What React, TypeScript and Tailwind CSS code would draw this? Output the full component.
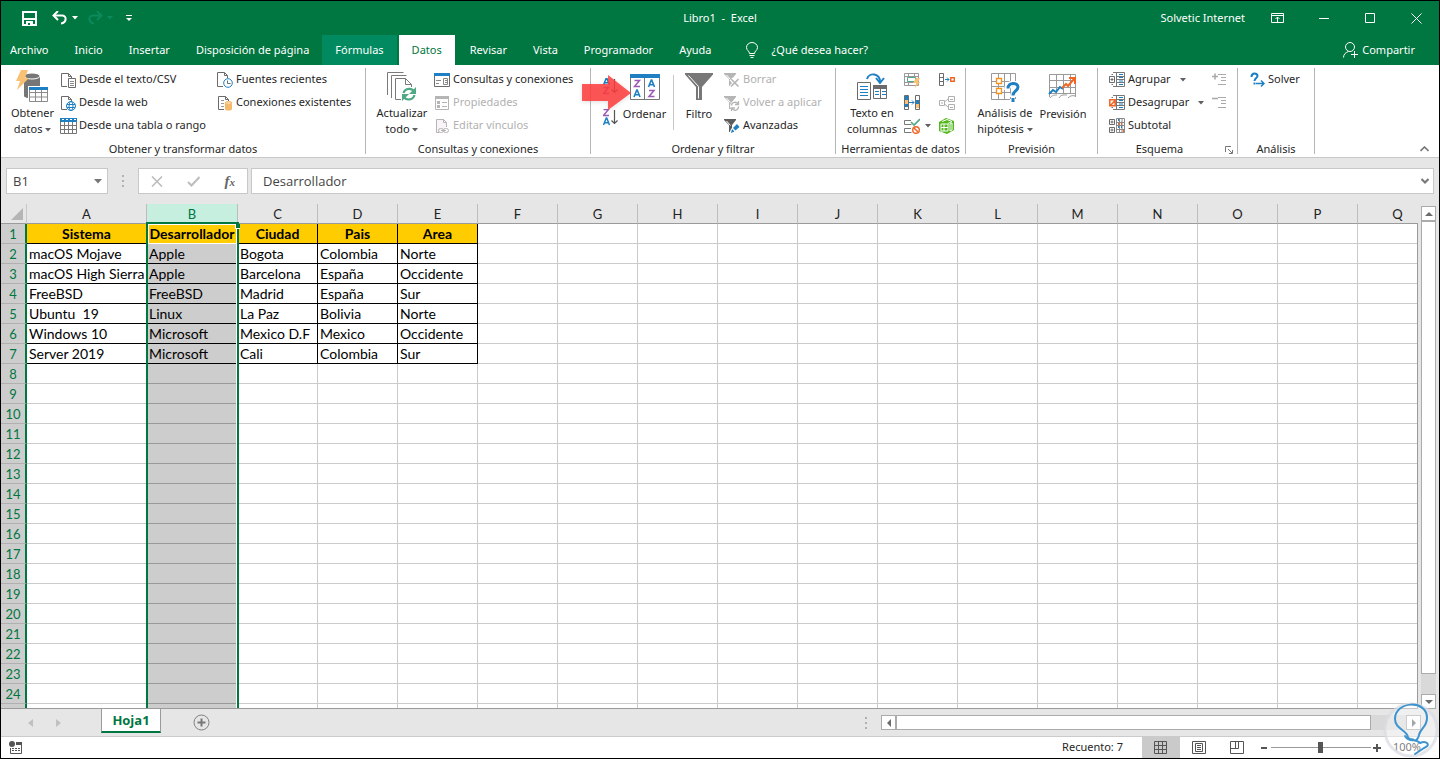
import type { ReactNode } from "react";
import { clsx } from "clsx";

const rows = [
  ["Sistema", "Desarrollador", "Ciudad", "Pais", "Area"],
  ["macOS Mojave", "Apple", "Bogota", "Colombia", "Norte"],
  ["macOS High Sierra", "Apple", "Barcelona", "España", "Occidente"],
  ["FreeBSD", "FreeBSD", "Madrid", "España", "Sur"],
  ["Ubuntu  19", "Linux", "La Paz", "Bolivia", "Norte"],
  ["Windows 10", "Microsoft", "Mexico D.F", "Mexico", "Occidente"],
  ["Server 2019", "Microsoft", "Cali", "Colombia", "Sur"],
];
const columns = "ABCDEFGHIJKLMNOPQ".split("");
const rowCount = 25;

const GRAY = "#6b6b6b";
const BLUE = "#1e7fc2";
const LIGHT = "#b5b5b5";

function Svg({ w = 16, h = 16, children }: { w?: number; h?: number; children: ReactNode }) {
  return (
    <svg width={w} height={h} viewBox={`0 0 ${w} ${h}`} fill="none" className="shrink-0" aria-hidden="true">
      {children}
    </svg>
  );
}

function Caret({ color = "#5f5f5f" }: { color?: string }) {
  return (
    <svg width="6" height="4" viewBox="0 0 6 4" className="inline-block shrink-0" aria-hidden="true">
      <path d="M0 0h6L3 3.5z" fill={color} />
    </svg>
  );
}

/* ---------- ribbon icons ---------- */

const GetDataIcon = () => (
  <Svg w={34} h={34}>
    <path d="M8 6v20c0 3 16 3 16 0V6z" fill="#767676" />
    <ellipse cx="16" cy="6" rx="8" ry="3" fill="#767676" stroke="#fff" />
    <path d="M5 0h7L9 8h4L1 20l3-9H0z" fill="#f8c173" />
    <path d="M12 16h21v17H12z" fill="#fff" />
    <path d="M13.500 17.500h18v14h-18zM13.500 22.500h18M13.500 27h18M19.500 20v12M25.500 20v12" stroke="#8a8a8a" />
    <path d="M13 17h19v3H13z" fill={BLUE} />
  </Svg>
);

const Page = ({ color = GRAY }: { color?: string }) => (
  <path d="M7 14.500H1.500v-13h7l3 3V6M8.500 1.500v3h3" stroke={color} />
);

const TextFileIcon = () => (
  <Svg>
    <Page />
    <path d="M8.500 6.500h7v9h-7z" fill="#fff" stroke={GRAY} />
    <path d="M10 9.500h4M10 11.500h4M10 13.500h4" stroke="#8a8a8a" />
  </Svg>
);

const WebIcon = () => (
  <Svg>
    <Page />
    <circle cx="11" cy="11" r="4.500" fill="#fff" stroke={BLUE} />
    <path d="M7 9.500h8M7 12.500h8" stroke={BLUE} />
    <ellipse cx="11" cy="11" rx="2" ry="4.500" stroke={BLUE} />
  </Svg>
);

const TableIcon = () => (
  <Svg w={17}>
    <path d="M.5 .5h16v15H.5zM.5 7.500h16M.5 11.500h16M4.500 4v12M8.500 4v12M12.500 4v12" stroke="#777" />
    <path d="M0 0h17v4H0z" fill={BLUE} />
    <path d="M2 1.500h2M6 1.500h2M10 1.500h2M14 1.500h2" stroke="#fff" />
  </Svg>
);

const RecentIcon = () => (
  <Svg>
    <path d="M6 14.500H.5v-14h7l3 3V6M7.500 .5v3h3" stroke={GRAY} />
    <circle cx="11" cy="11" r="4.300" fill="#fff" stroke={BLUE} />
    <path d="M10.500 8.500v3h3" stroke={GRAY} />
  </Svg>
);

const ConnectionsIcon = () => (
  <Svg>
    <path d="M7 14.500H1.500v-13h7l3 3V6M8.500 1.500v3h3" stroke={GRAY} />
    <path d="M4 5.500h3M4 8.500h3M4 11.500h3" stroke="#999" />
    <path d="M8 8v6c0 2 7 2 7 0V8z" fill="#f5b96a" />
    <ellipse cx="11.500" cy="8" rx="3.500" ry="1.500" fill="#f9d6a4" stroke="#f5b96a" />
  </Svg>
);

const RefreshAllIcon = () => (
  <Svg w={32} h={32}>
    <path d="M1.500 24V1.500h16M5.500 27V4.500h15" stroke="#7a7a7a" />
    <path d="M15 28.500H9.500v-21h10l6 6V16M19.500 7.500v6h6" stroke="#7a7a7a" />
    <path d="M17.500 22a6 6 0 0 1 11-1M28.500 24a6 6 0 0 1-11 1.500" stroke="#4fa985" strokeWidth="2.200" />
    <path d="M30 16v7h-7zM16 30v-7h7z" fill="#4fa985" />
  </Svg>
);

const QueriesIcon = () => (
  <Svg>
    <path d="M.5 1.500h15v13H.5z" stroke={GRAY} />
    <path d="M0 1h16v3H0z" fill={BLUE} />
    <path d="M2 8.500h5M9.500 6.500h4v6h-4zM11 8.500h2M11 10.500h2M2 11.500h3" stroke="#888" />
  </Svg>
);

const PropertiesIcon = () => (
  <Svg>
    <path d="M1.500 1.500h13v13h-13z" stroke={LIGHT} />
    <path d="M1 1h14v3H1zM3 6h3v3H3zM3 10h3v3H3z" fill={LIGHT} />
    <path d="M8 7.500h5M8 11.500h5" stroke={LIGHT} />
  </Svg>
);

const EditLinksIcon = () => (
  <Svg>
    <path d="M5 14.500H2.500v-13h7l3 3V9M9.500 1.500v3h3" stroke={LIGHT} fill="#faf4f8" />
    <rect x="4.500" y="10.500" width="5" height="4" rx="2" stroke={LIGHT} />
    <rect x="9.500" y="10.500" width="5" height="4" rx="2" stroke={LIGHT} />
    <path d="M7 12.500h5" stroke={LIGHT} />
  </Svg>
);

const A = "M0 7L2.800 0h.4L6 7M1 4.700h4";
const Z = "M0 .5h5L0 6.500h5.500";

function SortIcon({ desc = false }: { desc?: boolean }) {
  return (
    <Svg w={15} h={17}>
      <path d={A} transform={desc ? "translate(.5 9)" : "translate(.5 0)"} stroke={BLUE} strokeWidth="1.500" />
      <path d={Z} transform={desc ? "translate(.5 0)" : "translate(.5 9)"} stroke="#9b59b6" strokeWidth="1.400" />
      <path d="M11.500 1v13M8.500 11.500l3 3 3-3" stroke="#555" strokeWidth="1.200" />
    </Svg>
  );
}

const OrderIcon = () => (
  <Svg w={30} h={26}>
    <path d="M.5 .5h29v25H.5zM14.500 3v23" stroke="#777" />
    <path d="M0 0h30v4H0z" fill={BLUE} />
    <path d={Z} transform="translate(4.500 6)" stroke="#9b59b6" strokeWidth="1.500" />
    <path d={A} transform="translate(4 16)" stroke={BLUE} strokeWidth="1.600" />
    <path d={A} transform="translate(18.500 6)" stroke={BLUE} strokeWidth="1.600" />
    <path d={Z} transform="translate(19 16)" stroke="#9b59b6" strokeWidth="1.500" />
  </Svg>
);

const FilterIcon = () => (
  <Svg w={28} h={28}>
    <path d="M0 0h28v1.500L17 14v13h-6V14L0 1.500z" fill="#777" />
    <path d="M3.500 2.500L13.500 13.500v12" stroke="#fff" />
  </Svg>
);

function SmallFilter({ color, children }: { color: string; children: ReactNode }) {
  return (
    <Svg>
      <path d="M0 1h12v1L8 7v7H5V7L0 2z" fill={color} />
      <path d="M2.500 3l4 4.500" stroke="#fff" />
      {children}
    </Svg>
  );
}

const ClearIcon = () => (
  <SmallFilter color={LIGHT}>
    <path d="M7 7l8 8M15 7l-8 8" stroke="#fff" strokeWidth="4" />
    <path d="M7 7l7.500 7.500M14.500 7L7 14.500" stroke={LIGHT} strokeWidth="1.600" />
  </SmallFilter>
);

const ReapplyIcon = () => (
  <SmallFilter color={LIGHT}>
    <circle cx="11" cy="11" r="5" fill="#fff" />
    <path d="M7.500 10.500a3.500 3.500 0 0 1 6.500-1.500M14.500 11.500A3.500 3.500 0 0 1 8 13.500M14.500 6v3.500H11M7.500 16v-3H11" stroke={LIGHT} strokeWidth="1.300" />
  </SmallFilter>
);

const AdvancedIcon = () => (
  <SmallFilter color="#5c5c5c">
    <path d="M5 16l2-5 6-6 4 4-6 6z" fill="#fff" />
    <path d="M7 15l1-4 2.500 2.500zM9 10l2.500 2.500L15.500 9 13 6z" fill={BLUE} />
  </SmallFilter>
);

const TextToColumnsIcon = () => (
  <Svg w={32} h={28}>
    <path d="M1.500 9.500h13v17h-13z" stroke="#6b6b6b" />
    <path d="M4 13.500h8M4 16.500h8M4 19.500h8M4 22.500h8" stroke={BLUE} />
    <path d="M17.500 13.500h13v12h-13zM24.500 15v10" stroke="#6b6b6b" />
    <path d="M17 12h14v4H17z" fill="#6b6b6b" />
    <path d="M19 18.500h4M19 21.500h4M26 18.500h4M26 21.500h4" stroke={BLUE} />
    <path d="M11 6c2-7 13-6 13 3" stroke={BLUE} strokeWidth="2" />
    <path d="M20 5l4 5 4-5" stroke={BLUE} strokeWidth="2" />
  </Svg>
);

const FlashFillIcon = () => (
  <Svg>
    <path d="M.5 1.500h14v12H.5zM.5 4.500h14M.5 10.500h10M4.500 10v4M4.500 1v3M10.500 1v3" stroke="#999" />
    <path d="M3.500 5.500h8v4h-8z" fill="#fff" stroke="#4fa985" />
    <path d="M12 6h4l-2 4h2l-5 6 1-5H9z" fill="#f8c173" />
  </Svg>
);

const DuplicatesIcon = () => (
  <Svg>
    <path d="M.5 .5h4v14h-4zM11.500 .5h4v14h-4z" stroke={GRAY} />
    <path d="M1 1h3v4H1zM1 9h3v3H1zM12 5h3v4h-3z" fill={BLUE} />
    <path d="M1 5h3v4H1zM12 9h3v4h-3z" fill="#f8c173" />
    <path d="M5 7.500h5M8 5.500l2 2-2 2" stroke={BLUE} />
  </Svg>
);

const ValidationIcon = () => (
  <Svg>
    <path d="M7 2.500H.5v4h7M7 10.500H.5v4h7" stroke="#777" />
    <path d="M7 4l3 3 6-6" stroke="#4fa985" strokeWidth="1.600" />
    <circle cx="12" cy="12" r="3.300" stroke="#f26522" strokeWidth="1.400" />
    <path d="M10 10l4 4" stroke="#f26522" strokeWidth="1.400" />
  </Svg>
);

const ConsolidateIcon = () => (
  <Svg>
    <path d="M.5 1.500h4v12h-4zM.5 5.500h4M.5 9.500h4" stroke={GRAY} />
    <path d="M6 7.500h4M8 5.500l2 2-2 2" stroke={BLUE} />
    <path d="M11.700 5.700h3.600v3.600h-3.600z" stroke="#f26522" strokeWidth="1.400" />
  </Svg>
);

const RelationsIcon = () => (
  <Svg>
    <path d="M.5 5.500h5v5h-5zM9.500 1.500h6v5h-6zM9.500 9.500h6v5h-6zM5.500 7L9 4M5.500 9L9 12M11 4.500h3M11 12.500h3M2 8h2" stroke="#b0b0b0" />
  </Svg>
);

const DataModelIcon = () => (
  <Svg>
    <path d="M0 4l7-4 8 3v9l-7 4-8-3z" fill="#52b81e" />
    <path d="M2 6h7v7H2zM5 6v7M2 9.500h7M3 3.500l5-2 5 2-4 2M11 6l2-1v7l-2 1z" stroke="#fff" />
  </Svg>
);

const WhatIfIcon = () => (
  <Svg w={30} h={30}>
    <path d="M1.500 1.500h24v26h-24zM1.500 9.500h24M1.500 14.500h24M1.500 20.500h24M8.500 1v26M14.500 1v26M20.500 1v26" stroke="#9a9a9a" />
    <path d="M6.500 6.500h5v5h-5zM6.500 16.500h5v5h-5z" fill="#fff" stroke="#f3931f" strokeWidth="1.300" />
    <path d="M17 18c0-8 11-8 11-2 0 4-5 4-5 8v1M23 27v3" stroke="#fff" strokeWidth="6" />
    <path d="M18 16.500c0-7 10-6 10-1.500 0 4-5 4-5 8.500M23 26v4" stroke={BLUE} strokeWidth="3" />
  </Svg>
);

const ForecastIcon = () => (
  <Svg w={30} h={28}>
    <path d="M1.500 1.500h26v19h-26zM1.500 7.500h26M1.500 14.500h26M8.500 1v20M15.500 1v20M22.500 1v20M1.500 20v4M27.500 20v4M2 25c2-3 5-3 7-3M11 25c2-4 6-3 8-3M20 25c2-2 4-3 7-2" stroke="#9a9a9a" />
    <path d="M1 21l4-4 3 2 4-5 3 2" stroke={BLUE} strokeWidth="2" />
    <path d="M14 15l4-4 2 2 6-7M21 5h6v6" stroke="#f26522" strokeWidth="2" />
  </Svg>
);

const GroupIcon = ({ off = false }: { off?: boolean }) => (
  <Svg>
    <path d="M4 2.500H2.500M4 12.500H2.500M7.500 .5h8v14h-8zM4 .5h4M4 14.500h4M7 4.500h8M7 7.500h8M7 10.500h8" stroke="#777" />
    <path d="M10 2.500h4M10 5.500h4M10 9h4M10 12.500h4" stroke={BLUE} />
    {off ? (
      <path d="M.8 4.800h5.400v6H.8zM1.500 10.500l4.500-5" fill="#fff" stroke="#f26522" strokeWidth="1.500" />
    ) : (
      <path d="M.5 4.500h5v6h-5zM1.500 7.500h3M3 6v3" fill="#fff" stroke={GRAY} />
    )}
  </Svg>
);

const SubtotalIcon = () => (
  <Svg>
    <path d="M.5 1.500h5v5h-5zM.5 9.500h5v5h-5zM1.500 4h3M3 2.500v3M1.500 12h3M3 10.500v3" stroke={GRAY} />
    <path d="M7.500 .5h8v14h-8zM7.500 4.500h8M7.500 7.500h8M7.500 11.500h8M10.500 0v15M13 0v15" stroke="#888" />
    <path d="M9 6h1M12 6h1M14 13h1" stroke="#f26522" strokeWidth="2" />
    <path d="M9 2h1M9 9h1M12 9h1" stroke={BLUE} strokeWidth="2" />
  </Svg>
);

const DetailIcon = ({ plus = false }: { plus?: boolean }) => (
  <Svg>
    <path d="M6 2.500h8M9 5.500h5M9 8.500h5M6 12.500h8" stroke="#aaa" />
    <path d={plus ? "M0 4.500h6M3 1.500v6" : "M0 3.500h6"} stroke="#aaa" strokeWidth="1.600" />
  </Svg>
);

const SolverIcon = () => (
  <Svg w={15}>
    <path d="M1.500 5c0-5 6-4 6-1 0 2-3 2-3 5M4.500 10.500v2" stroke={BLUE} strokeWidth="2" />
    <path d="M6 11.500h8M11 8.500l3 3-3 3" stroke={BLUE} strokeWidth="1.500" />
  </Svg>
);

/* ---------- ribbon building blocks ---------- */

function Group({ label, className, launcher, children }: { label: string; className: string; launcher?: boolean; children: ReactNode }) {
  return (
    <section className={clsx("relative mt-[3px] flex h-[86px] shrink-0 flex-col border-r border-[#b5b5b5]", className)}>
      <div className="flex h-[69px] shrink-0">{children}</div>
      <h2 className={clsx("text-center leading-6 whitespace-nowrap", launcher && "pr-4")}>{label}</h2>
      {launcher && (
        <button aria-label="Más opciones" className="absolute right-1 bottom-0">
          <Svg w={8} h={8}>
            <path d="M.5 6V.5H6M3 3l4 4M7.500 4v3.500H4" stroke="#777" />
          </Svg>
        </button>
      )}
    </section>
  );
}

function Big({ icon, className, children }: { icon: ReactNode; className: string; children: ReactNode }) {
  return (
    <button className={clsx("flex shrink-0 flex-col items-center whitespace-nowrap", className)}>
      <span className="flex h-[38px] items-center">{icon}</span>
      <span className="leading-4">{children}</span>
    </button>
  );
}

function Small({ icon, caret, disabled, children }: { icon: ReactNode; caret?: boolean; disabled?: boolean; children?: ReactNode }) {
  return (
    <button disabled={disabled} className="flex h-[23px] items-center gap-[3px] whitespace-nowrap disabled:text-[#b1b1b1]">
      <span className="flex w-4 justify-center">{icon}</span>
      {children}
      {caret && (
        <span className={clsx("flex", children ? "pl-[6px]" : "pl-[2px]")}>
          <Caret />
        </span>
      )}
    </button>
  );
}

function TitleBar() {
  return (
    <header className="relative flex h-[34px] items-center text-white">
      <div className="flex items-center pl-[21px]">
        <button aria-label="Guardar">
          <Svg w={15} h={15}>
            <path d="M1 1h13v13H1z" stroke="#fff" strokeWidth="2" />
            <path d="M2 7h11v2H2zM4 10h7v4H4z" fill="#fff" />
            <path d="M6 12h2v2H6z" fill="#007640" />
          </Svg>
        </button>
        <button aria-label="Deshacer" className="ml-[15px] flex items-center gap-1">
          <Svg w={16} h={14}>
            <path d="M2 4.500h8c5 0 5 7-1 8" stroke="#fff" strokeWidth="2" />
            <path d="M6 0L1.500 4.500 6 9" stroke="#fff" strokeWidth="2" />
          </Svg>
          <Caret color="#fff" />
        </button>
        <button aria-label="Rehacer" className="ml-[9px] flex items-center gap-1">
          <Svg w={16} h={14}>
            <path d="M14 4.500H6c-5 0-5 7 1 8M10 0l4.500 4.500L10 9" stroke="#0b8a5c" strokeWidth="2" />
          </Svg>
          <Caret color="#0b8a5c" />
        </button>
        <button aria-label="Personalizar barra" className="ml-[13px]">
          <Svg w={6} h={6}>
            <path d="M0 .5h6" stroke="#fff" />
            <path d="M0 3h6L3 6z" fill="#fff" />
          </Svg>
        </button>
      </div>
      <h1 className="absolute inset-x-0 text-center whitespace-pre">Libro1  -  Excel</h1>
      <div className="relative ml-auto flex items-center pr-[17px]">
        <span>Solvetic Internet</span>
        <button aria-label="Opciones de la cinta" className="ml-[26px]">
          <Svg w={13} h={10}>
            <path d="M.5 .5h12v9H.5zM.5 2.500h12M6.500 9V4M4.500 6l2-2 2 2" stroke="#fff" />
          </Svg>
        </button>
        <button aria-label="Minimizar" className="ml-[35px]">
          <Svg w={10} h={10}>
            <path d="M0 5.500h10" stroke="#fff" />
          </Svg>
        </button>
        <button aria-label="Maximizar" className="ml-9">
          <Svg w={10} h={10}>
            <path d="M.5 .5h9v9h-9z" stroke="#fff" />
          </Svg>
        </button>
        <button aria-label="Cerrar" className="ml-9">
          <Svg w={11} h={11}>
            <path d="M.5 .5l10 10M10.500 .5l-10 10" stroke="#fff" />
          </Svg>
        </button>
      </div>
    </header>
  );
}

const tabs = ["Archivo", "Inicio", "Insertar", "Disposición de página", "Fórmulas", "Datos", "Revisar", "Vista", "Programador", "Ayuda"];

function Tabs() {
  return (
    <nav className="flex h-[30px] items-stretch text-white">
      {tabs.map((tab) => (
        <button
          key={tab}
          className={clsx(
            "px-[13px] whitespace-nowrap first:pl-[9px]",
            tab === "Fórmulas" && "mr-[2px] bg-[#018a5f]",
            tab === "Datos" && "mr-[2px] bg-white text-[#007640]",
          )}
        >
          {tab}
        </button>
      ))}
      <button className="ml-[21px] flex items-center gap-[14px]">
        <Svg w={12} h={17}>
          <path d="M3.500 11.500C3.500 9 .5 8.500 .5 5.500a5.500 5 0 0 1 11 0c0 3-3 3.500-3 6zM3.500 13.500h5M4.500 15.500h3" stroke="#fff" />
        </Svg>
        ¿Qué desea hacer?
      </button>
      <button className="mr-6 ml-auto flex items-center gap-1">
        <Svg w={15} h={16}>
          <circle cx="7" cy="5" r="4.500" stroke="#fff" />
          <path d="M.5 15.500c0-3 2-5 5-6M8 12.500h7M11.500 9v7" stroke="#fff" />
        </Svg>
        Compartir
      </button>
    </nav>
  );
}

function Ribbon() {
  return (
    <div className="relative flex h-[93px] overflow-hidden border-b border-[#c8c8c8] bg-white">
      <Group label="Obtener y transformar datos" className="w-[365px]">
        <Big icon={<GetDataIcon />} className="w-[59px] pl-1">
          Obtener
          <br />
          datos <Caret />
        </Big>
        <div className="w-[157px]">
          <Small icon={<TextFileIcon />}>Desde el texto/CSV</Small>
          <Small icon={<WebIcon />}>Desde la web</Small>
          <Small icon={<TableIcon />}>Desde una tabla o rango</Small>
        </div>
        <div>
          <Small icon={<RecentIcon />}>Fuentes recientes</Small>
          <Small icon={<ConnectionsIcon />}>Conexiones existentes</Small>
        </div>
      </Group>
      <Group label="Consultas y conexiones" className="w-[225px]">
        <Big icon={<RefreshAllIcon />} className="w-[68px] pl-1">
          Actualizar
          <br />
          todo <Caret />
        </Big>
        <div>
          <Small icon={<QueriesIcon />}>Consultas y conexiones</Small>
          <Small icon={<PropertiesIcon />} disabled>Propiedades</Small>
          <Small icon={<EditLinksIcon />} disabled>Editar vínculos</Small>
        </div>
      </Group>
      <Group label="Ordenar y filtrar" className="w-[245px]">
        <div className="flex w-[38px] flex-col items-center gap-[14px] pt-[10px]">
          <button aria-label="Ordenar de A a Z">
            <SortIcon />
          </button>
          <button aria-label="Ordenar de Z a A">
            <SortIcon desc />
          </button>
        </div>
        <Big icon={<OrderIcon />} className="w-[31px]">Ordenar</Big>
        <div className="mt-[7px] ml-[13px] h-[55px] w-px bg-[#c8c8c8]" />
        <Big icon={<FilterIcon />} className="w-[50px]">Filtro</Big>
        <div>
          <Small icon={<ClearIcon />} disabled>Borrar</Small>
          <Small icon={<ReapplyIcon />} disabled>Volver a aplicar</Small>
          <Small icon={<AdvancedIcon />}>Avanzadas</Small>
        </div>
        {/* pointer over the sort buttons */}
        <svg width="60" height="46" viewBox="0 0 60 46" className="pointer-events-none absolute top-px -left-[14px] drop-shadow-sm" aria-hidden="true">
          <path d="M5 15h26V6l23 18-23 17V32H5z" fill="#ff3c3c" fillOpacity=".86" />
        </svg>
      </Group>
      <Group label="Herramientas de datos" className="w-[130px]">
        <Big icon={<TextToColumnsIcon />} className="w-[68px] pl-1">
          Texto en
          <br />
          columnas
        </Big>
        <div className="w-[35px]">
          <Small icon={<FlashFillIcon />} />
          <Small icon={<DuplicatesIcon />} />
          <Small icon={<ValidationIcon />} caret />
        </div>
        <div>
          <Small icon={<ConsolidateIcon />} />
          <Small icon={<RelationsIcon />} disabled />
          <Small icon={<DataModelIcon />} />
        </div>
      </Group>
      <Group label="Previsión" className="w-[132px]">
        <Big icon={<WhatIfIcon />} className="ml-[9px] w-[60px]">
          Análisis de
          <br />
          hipótesis <Caret />
        </Big>
        <Big icon={<ForecastIcon />} className="w-[56px]">Previsión</Big>
      </Group>
      <Group label="Esquema" className="w-[140px]" launcher>
        <div className="grow pl-[11px]">
          <Small icon={<GroupIcon />} caret>Agrupar</Small>
          <Small icon={<GroupIcon off />} caret>Desagrupar</Small>
          <Small icon={<SubtotalIcon />}>Subtotal</Small>
        </div>
        <div className="pr-[9px]">
          <Small icon={<DetailIcon plus />} disabled />
          <Small icon={<DetailIcon />} disabled />
        </div>
      </Group>
      <Group label="Análisis" className="w-[77px]">
        <div className="pl-[11px]">
          <Small icon={<SolverIcon />}>Solver</Small>
        </div>
      </Group>
      <button aria-label="Contraer la cinta" className="mt-auto mr-[10px] mb-[5px] ml-auto">
        <Svg w={9} h={6}>
          <path d="M.5 5l4-4 4 4" stroke="#777" strokeWidth="1.600" />
        </Svg>
      </button>
    </div>
  );
}

const Dots = () => (
  <Svg w={2} h={12}>
    <path d="M1 0v2M1 5v2M1 10v2" stroke="#b0b0b0" strokeWidth="2" />
  </Svg>
);

function FormulaBar() {
  return (
    <div className="flex h-[46px] shrink-0 items-center px-[5px] font-['Open_Sans',sans-serif] text-[13px] text-[#444]">
      <div className="flex h-[26px] w-[102px] items-center border border-[#c8c8c8] bg-white pr-[5px] pl-[6px]">
        <input aria-label="Cuadro de nombres" defaultValue="B1" className="w-full min-w-0 pt-px outline-none" />
        <Svg w={8} h={5}>
          <path d="M0 0h8L4 4.500z" fill="#777" />
        </Svg>
      </div>
      <span className="mx-[14px]">
        <Dots />
      </span>
      <div className="flex h-[26px] w-[110px] items-center justify-around border border-[#c8c8c8] bg-white">
        <button aria-label="Cancelar">
          <Svg w={12} h={11}>
            <path d="M1 .5l10 10M11 .5l-10 10" stroke="#bdbdbd" strokeWidth="1.600" />
          </Svg>
        </button>
        <button aria-label="Introducir">
          <Svg w={13} h={11}>
            <path d="M1 6l3.500 3.500L12.500 1" stroke="#bdbdbd" strokeWidth="2" />
          </Svg>
        </button>
        <button aria-label="Insertar función" className="font-['Liberation_Serif',serif] text-[15px] leading-4 font-bold text-[#666] italic">
          f<span className="text-[11px]">x</span>
        </button>
      </div>
      <div className="ml-[3px] flex h-[26px] grow items-center border border-[#c8c8c8] bg-white pr-1 pl-[11px]">
        <input aria-label="Barra de fórmulas" defaultValue="Desarrollador" className="w-full pt-px outline-none" />
        <Svg w={8} h={6}>
          <path d="M.5 1l3.500 3.500L7.500 1" stroke="#777" strokeWidth="2" />
        </Svg>
      </div>
    </div>
  );
}

function Sheet() {
  return (
    <div className="relative min-w-0 grow overflow-hidden border-b border-[#9b9b9b]">
      <table className="w-[1437px] table-fixed border-separate border-spacing-0 bg-white font-[Lato,sans-serif] text-[13px] leading-4 text-black">
        <colgroup>
          <col className="w-[26px]" />
          <col className="w-[120px]" />
          <col className="w-[91px]" />
          <col span={15} className="w-20" />
        </colgroup>
        <thead>
          <tr className="h-5">
            <th className="border-r border-b border-r-[#c8c8c8] border-b-[#9b9b9b] bg-[#e6e6e6] p-0">
              <svg width="12" height="12" className="mt-px mr-[3px] ml-auto" aria-hidden="true">
                <path d="M12 0v12H0z" fill="#b5b5b5" />
              </svg>
            </th>
            {columns.map((c) => (
              <th
                key={c}
                scope="col"
                className={clsx(
                  "border-r border-b border-r-[#bdbdbd] border-b-[#9b9b9b] p-0 font-normal",
                  c === "B" ? "bg-[#c6efe0] text-[#007640]" : "bg-[#e6e6e6] text-[#222]",
                )}
              >
                {c}
              </th>
            ))}
          </tr>
        </thead>
        <tbody>
          {Array.from({ length: rowCount }, (_, r) => (
            <tr key={r} className="h-5">
              <th scope="row" className="border-r-2 border-b border-r-[#007640] border-b-[#b0b0b0] bg-[#cdcdcd] p-0 font-normal text-[#007640]">
                {r + 1}
              </th>
              {columns.map((c, i) => {
                const value = rows[r]?.[i];
                return (
                  <td
                    key={c}
                    className={clsx(
                      "border-r border-b p-0 text-[14px] whitespace-pre",
                      value ? "border-black" : i === 1 ? "border-[#999]" : "border-[#cbcbcb]",
                      r === 0 && value ? "bg-[#ffcc00] text-center font-bold" : "pl-[2px]",
                      i === 1 && r > 0 && "bg-[#cdcdcd]",
                    )}
                  >
                    {value}
                  </td>
                );
              })}
            </tr>
          ))}
        </tbody>
      </table>
      {/* selected column frame with its fill handle */}
      <div className="pointer-events-none absolute top-[18px] -bottom-1 left-[145px] w-[93px] border-2 border-[#007640]">
        <div className="absolute inset-y-0 right-0 w-px bg-white" />
        <div className="h-5 border border-white" />
        <div className="absolute top-0 -right-[3px] size-[5px] border-b border-l border-white bg-[#007640]" />
      </div>
    </div>
  );
}

function ScrollButton({ label, d }: { label: string; d: string }) {
  return (
    <button aria-label={label} className="flex size-[15px] shrink-0 items-center justify-center border border-[#ababab] bg-white">
      <Svg w={8} h={8}>
        <path d={d} fill="#6b6b6b" />
      </Svg>
    </button>
  );
}

function BottomBar() {
  return (
    <div className="flex h-[28px] shrink-0 items-stretch border-b border-[#cbcbcb]">
      <div className="flex w-[100px] items-center gap-[23px] pl-[27px]">
        <button aria-label="Hoja anterior">
          <Svg w={5} h={8}>
            <path d="M5 0v8L0 4z" fill="#c0c0c0" />
          </Svg>
        </button>
        <button aria-label="Hoja siguiente">
          <Svg w={5} h={8}>
            <path d="M0 0v8l5-4z" fill="#c0c0c0" />
          </Svg>
        </button>
      </div>
      <button className="-mt-px mb-[3px] w-[60px] border-x border-b-2 border-x-[#9b9b9b] border-b-[#007640] bg-white pt-[2px] font-['Open_Sans',sans-serif] text-[13px] font-bold text-[#007640]">
        Hoja1
      </button>
      <button aria-label="Hoja nueva" className="ml-8">
        <Svg w={17} h={17}>
          <circle cx="8.500" cy="8.500" r="7.500" stroke="#808080" />
          <path d="M4.500 8.500h8M8.500 4.500v8" stroke="#777" strokeWidth="2" />
        </Svg>
      </button>
      <div className="mr-[18px] ml-auto flex w-[556px] items-center">
        <Dots />
        <div className="ml-[14px] flex grow items-center bg-[#d9d9d9]">
          <ScrollButton label="Desplazar a la izquierda" d="M6 0v8L2 4z" />
          <div className="h-[15px] w-[475px] border border-[#ababab] bg-white" />
          <div className="ml-auto">
            <ScrollButton label="Desplazar a la derecha" d="M2 0v8l4-4z" />
          </div>
        </div>
      </div>
    </div>
  );
}

function StatusBar() {
  return (
    <footer className="flex h-[21px] shrink-0 items-center bg-white">
      <button aria-label="Grabar macro" className="ml-2">
        <Svg w={13} h={13}>
          <path d="M1.500 7v5.500h11V3" stroke="#555" />
          <path d="M3 7.500h9M3 9.500h9" stroke="#555" strokeDasharray="2 1" />
          <path d="M7 1h6v3H7z" fill="#555" />
          <circle cx="3" cy="3" r="3" fill="#555" />
        </Svg>
      </button>
      <span className="mr-[19px] ml-auto">Recuento: 7</span>
      <button aria-label="Vista normal" className="flex h-full w-[38px] items-center justify-center bg-[#cacaca]">
        <Svg w={13} h={13}>
          <path d="M.5 .5h12v12H.5zM.5 4.500h12M.5 8.500h12M4.500 .5v12M8.500 .5v12" stroke="#555" />
        </Svg>
      </button>
      <button aria-label="Diseño de página" className="flex w-[38px] justify-center">
        <Svg w={14} h={13}>
          <path d="M.5 .5h13v12H.5zM3.500 2.500h7v8h-7zM5 4.500h4M5 6.500h4M5 8.500h4" stroke="#555" />
        </Svg>
      </button>
      <button aria-label="Salto de página" className="flex w-[38px] justify-center">
        <Svg w={14} h={13}>
          <path d="M.5 .5h13v12H.5zM.5 7.500h8M5.500 .5v7M8.500 .5v7" stroke="#555" />
        </Svg>
      </button>
      <button aria-label="Alejar" className="ml-[5px]">
        <Svg w={6} h={8}>
          <path d="M0 4h6" stroke="#555" strokeWidth="2" />
        </Svg>
      </button>
      <input
        type="range"
        aria-label="Zoom"
        defaultValue={50}
        className="mr-[2px] ml-1 w-[100px] appearance-none bg-transparent [&::-webkit-slider-runnable-track]:h-px [&::-webkit-slider-runnable-track]:bg-[#999] [&::-webkit-slider-thumb]:-mt-[5px] [&::-webkit-slider-thumb]:h-[11px] [&::-webkit-slider-thumb]:w-[5px] [&::-webkit-slider-thumb]:appearance-none [&::-webkit-slider-thumb]:bg-[#555]"
      />
      <button aria-label="Acercar">
        <Svg w={8} h={8}>
          <path d="M0 4h8M4 0v8" stroke="#555" strokeWidth="2" />
        </Svg>
      </button>
      <span className="mr-[18px] ml-3">100%</span>
    </footer>
  );
}

export default function App() {
  return (
    <div className="relative flex h-screen flex-col overflow-hidden border border-black bg-[#e6e6e6] font-['Noto_Sans',sans-serif] text-[11px] text-[#262626]">
      <div className="shrink-0 bg-[#007640]">
        <TitleBar />
        <Tabs />
        <Ribbon />
      </div>
      <FormulaBar />
      <div className="flex min-h-0 grow">
        <Sheet />
        <div className="mt-[19px] w-px shrink-0 bg-[#9b9b9b]" />
        <div className="flex w-[21px] shrink-0 flex-col items-center pt-[2px]">
          <ScrollButton label="Desplazar hacia arriba" d="M0 6h8L4 2z" />
          <div className="flex w-[15px] grow flex-col bg-[#d9d9d9]">
            <div className="mb-5 grow border border-[#ababab] bg-white" />
            <ScrollButton label="Desplazar hacia abajo" d="M0 2h8L4 6z" />
          </div>
        </div>
      </div>
      <BottomBar />
      <StatusBar />
      {/* site badge */}
      <svg width="56" height="56" viewBox="0 0 56 56" fill="none" className="pointer-events-none absolute right-0 bottom-0" aria-hidden="true">
        <circle cx="28" cy="28" r="26" fill="#fff" fillOpacity=".4" stroke="#d8dbe2" strokeOpacity=".7" strokeWidth="3" />
        <path
          d="M31 38c-2-2-5 1-6-3-1-7-13-8-13-18 0-18 32-20 32-1 0 9-7 11-8 17 0 3-3 5-3 6 M22 34c5 8 9 1 15 7 6-3 12 2 4 5l-9 6"
          stroke="#3d94cf"
          strokeWidth="2"
          strokeLinecap="round"
          strokeLinejoin="round"
        />
      </svg>
    </div>
  );
}
